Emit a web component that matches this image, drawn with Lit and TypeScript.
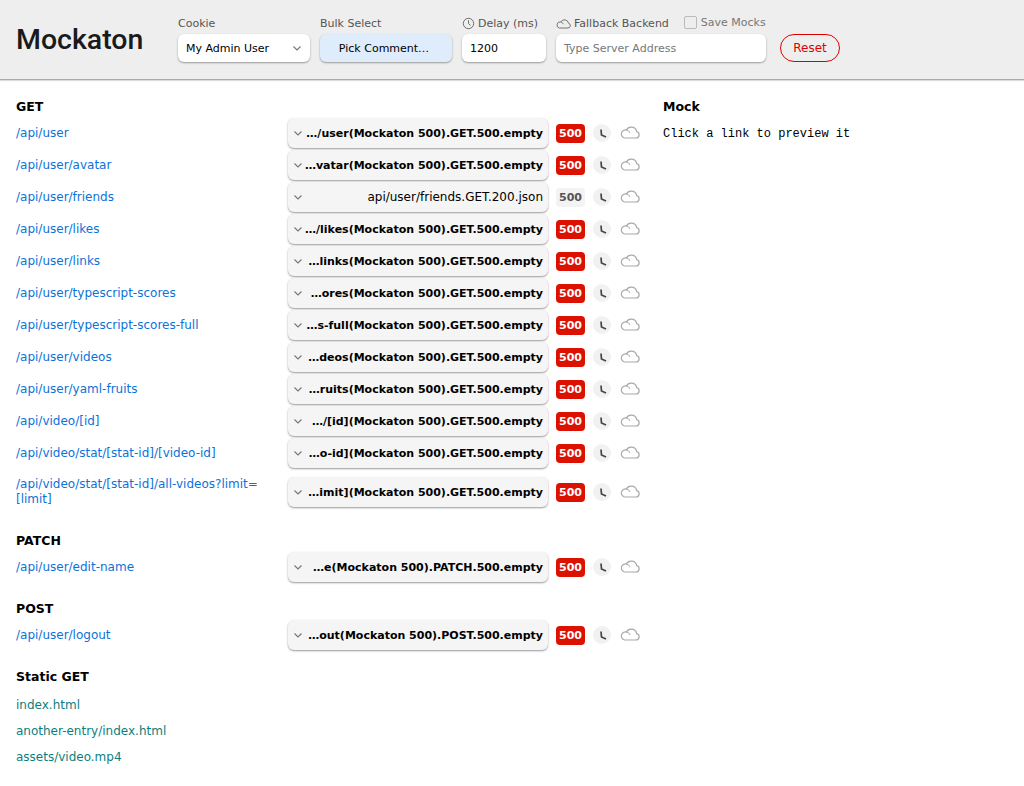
import {LitElement, html, css, svg} from 'lit';
import {customElement} from 'lit/decorators.js';

const chevron = html`<svg class="chevron" viewBox="0 0 10 10"><path d="M1.5 3.5 5 7l3.5-3.5" fill="none" stroke="currentColor" stroke-width="1.2"/></svg>`;
const cloudPath = svg`<path d="M4.6 13H16a3.2 3.2 0 0 0 .7-6.3A5.5 5.5 0 0 0 6.4 5 4.1 4.1 0 0 0 4.6 13Z" fill="none" stroke="currentColor" stroke-width="1.2"/><path d="M6.4 5a4.6 4.6 0 0 1 3.6 3" fill="none" stroke="currentColor" stroke-width="1"/>`;

const rows = [
  ['/api/user', '…/user(Mockaton 500).GET.500.empty'],
  ['/api/user/avatar', '…vatar(Mockaton 500).GET.500.empty'],
  ['/api/user/friends', 'api/user/friends.GET.200.json', true],
  ['/api/user/likes', '…/likes(Mockaton 500).GET.500.empty'],
  ['/api/user/links', '…links(Mockaton 500).GET.500.empty'],
  ['/api/user/typescript-scores', '…ores(Mockaton 500).GET.500.empty'],
  ['/api/user/typescript-scores-full', '…s-full(Mockaton 500).GET.500.empty'],
  ['/api/user/videos', '…deos(Mockaton 500).GET.500.empty'],
  ['/api/user/yaml-fruits', '…ruits(Mockaton 500).GET.500.empty'],
  ['/api/video/[id]', '…/[id](Mockaton 500).GET.500.empty'],
  ['/api/video/stat/[stat-id]/[video-id]', '…o-id](Mockaton 500).GET.500.empty'],
  ['/api/video/stat/[stat-id]/all-videos?limit=[limit]', '…imit](Mockaton 500).GET.500.empty'],
];

@customElement('app-root')
export class AppRoot extends LitElement {
  static styles = css`
    :host {
      display: block;
      font-family: "DejaVu Sans", sans-serif;
      font-size: 12px;
      color: #000;
    }
    header {
      display: flex;
      align-items: flex-end;
      height: 80px;
      box-sizing: border-box;
      padding: 0 0 17px 16px;
      background: #eee;
      border-bottom: 1px solid #aaa;
      box-shadow: 0 1px 1px #ddd;
    }
    .logo {
      width: 162px;
      height: 30px;
      line-height: 30px;
      margin-bottom: 7px;
      font-family: Roboto, sans-serif;
      font-weight: 500;
      font-size: 28.5px;
      color: #1a1a1a;
    }
    .field { margin-right: 10px; }
    .label {
      display: flex;
      align-items: center;
      gap: 3px;
      height: 16px;
      margin-bottom: 3px;
      font-size: 11px;
      color: #555;
    }
    .label svg { width: 13px; height: 13px; color: #666; }
    .label svg.cloud { width: 15px; height: 11px; }
    .control {
      display: flex;
      align-items: center;
      box-sizing: border-box;
      height: 28px;
      padding: 0 8px;
      border-radius: 6px;
      background: #fff;
      box-shadow: 0 1px 2px #999;
      font-size: 11px;
    }
    .cookie { width: 132px; justify-content: space-between; }
    .bulk { width: 132px; justify-content: center; background: #deecfc; padding-right: 12px; }
    .delay { width: 84px; }
    .backend { width: 210px; color: #777; }
    .chevron { width: 10px; height: 10px; color: #777; flex: none; }
    .save {
      display: flex;
      align-items: center;
      gap: 4px;
      height: 16px;
      margin: 0 0 2px 12px;
      font-size: 11px;
      color: #777;
    }
    .box {
      width: 11px;
      height: 11px;
      border: 1px solid #bbb;
      border-radius: 2px;
    }
    .reset {
      box-sizing: border-box;
      width: 60px;
      height: 28px;
      margin-left: 4px;
      line-height: 26px;
      text-align: center;
      border: 1px solid #d00;
      border-radius: 14px;
      color: #d00;
      font-size: 12px;
    }
    main {
      display: grid;
      grid-template-columns: 647px 1fr;
      padding: 1px 0 0 16px;
    }
    h2 {
      margin: 14px 0 0;
      height: 22px;
      line-height: 24px;
      font-size: 12.5px;
      font-weight: 700;
    }
    .row {
      display: grid;
      grid-template-columns: 272px 260px 37px 26px 30px;
      align-items: center;
      min-height: 32px;
    }
    .link {
      padding: 8px 10px 8px 0;
      line-height: 15px;
      color: #0b72d9;
      overflow-wrap: anywhere;
    }
    .mock-select {
      display: flex;
      align-items: center;
      box-sizing: border-box;
      height: 30px;
      padding: 0 5px;
      border-radius: 6px;
      background: #f5f5f5;
      box-shadow: 0 1px 2px #999;
      font-size: 11px;
      font-weight: 700;
      white-space: nowrap;
    }
    .mock-select span { flex: 1; text-align: right; }
    .mock-select.plain { font-weight: 400; font-size: 12px; }
    .badge {
      width: 29px;
      height: 19px;
      margin-left: 8px;
      line-height: 19px;
      text-align: center;
      border-radius: 4px;
      background: #dd1100;
      color: #fff;
      font-size: 11px;
      font-weight: 700;
    }
    .badge.off { background: #f3f3f3; color: #555; }
    .clock {
      width: 18px;
      height: 18px;
      margin-left: 8px;
      border-radius: 50%;
      background: #f1f1f1;
    }
    .clock svg { display: block; width: 18px; height: 18px; }
    .row .cloud { width: 20px; height: 14px; margin: 0 0 2px 9px; color: #aaa; }
    .static {
      height: 26px;
      line-height: 26px;
      color: #0a7f7f;
    }
    .statics { margin-top: 5px; }
    .preview h2 { margin-bottom: 10px; }
    .preview pre {
      margin: 0;
      font-family: "Liberation Mono", monospace;
      font-size: 12px;
      line-height: 14px;
    }
  `;

  renderRow(r: any[]) {
    const off = r[2];
    return html`<div class="row">
      <div class="link">${r[0]}</div>
      <div class="mock-select ${off ? 'plain' : ''}">${chevron}<span>${r[1]}</span></div>
      <div class="badge ${off ? 'off' : ''}">500</div>
      <div class="clock"><svg viewBox="0 0 18 18"><path d="M8 5.5l.5 5.5 4.5 2" fill="none" stroke="#444" stroke-width="1.7"/></svg></div>
      <svg class="cloud" viewBox="0 0 20 14">${cloudPath}</svg>
    </div>`;
  }

  render() {
    return html`
      <header>
        <div class="logo">Mockaton</div>
        <div class="field">
          <div class="label">Cookie</div>
          <div class="control cookie">My Admin User ${chevron}</div>
        </div>
        <div class="field">
          <div class="label">Bulk Select</div>
          <div class="control bulk">Pick Comment…</div>
        </div>
        <div class="field">
          <div class="label">
            <svg viewBox="0 0 14 14"><circle cx="7" cy="7" r="5.6" fill="none" stroke="currentColor" stroke-width="1"/><path d="M7 3.5V7l2.2 2" fill="none" stroke="currentColor"/></svg>
            Delay (ms)
          </div>
          <div class="control delay">1200</div>
        </div>
        <div class="field">
          <div class="label">
            <svg class="cloud" viewBox="0 0 20 14">${cloudPath}</svg>
            Fallback Backend
            <div class="save"><div class="box"></div>Save Mocks</div>
          </div>
          <div class="control backend">Type Server Address</div>
        </div>
        <div class="reset">Reset</div>
      </header>
      <main>
        <div>
          <h2>GET</h2>
          ${rows.map(r => this.renderRow(r))}
          <h2>PATCH</h2>
          ${this.renderRow(['/api/user/edit-name', '…e(Mockaton 500).PATCH.500.empty'])}
          <h2>POST</h2>
          ${this.renderRow(['/api/user/logout', '…out(Mockaton 500).POST.500.empty'])}
          <h2>Static GET</h2>
          <div class="statics">
            <div class="static">index.html</div>
            <div class="static">another-entry/index.html</div>
            <div class="static">assets/video.mp4</div>
          </div>
        </div>
        <div class="preview">
          <h2>Mock</h2>
          <pre>Click a link to preview it</pre>
        </div>
      </main>
    `;
  }
}
